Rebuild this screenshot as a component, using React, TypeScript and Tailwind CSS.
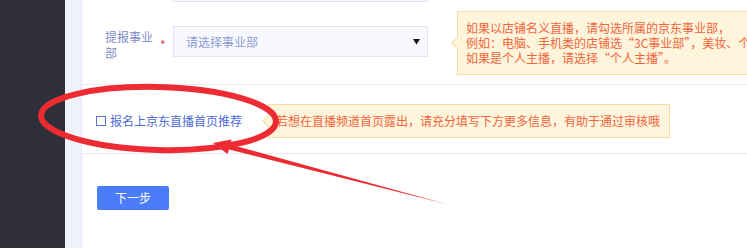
import { ReactNode } from 'react';

// Tooltip bubble with a small arrow pointing left
function Tip({ children, className }: { children: ReactNode; className?: string }) {
  return (
    <div
      className={`relative shrink-0 border border-[#f9dca4] bg-[#fff4dc] text-[12px] text-[#f0663c] ${className ?? ''}`}
    >
      <span className="absolute left-[-5px] top-[calc(50%-4px)] h-[8px] w-[8px] rotate-45 border-b border-l border-[#f9dca4] bg-[#fff4dc]" />
      <div className="relative">{children}</div>
    </div>
  );
}

export default function App() {
  return (
    <div className="relative flex h-[248px] w-[747px] overflow-hidden bg-white font-['Noto_Sans_CJK_SC','Liberation_Sans',sans-serif]">
      {/* sidebar */}
      <div className="w-[65px] shrink-0 bg-[#2e2f38]" />
      <div className="w-[17px] shrink-0 border-r border-[#e2e9f6] bg-[#eef3fc]" />

      <div className="min-w-0 flex-1">
        {/* bottom edge of the field above */}
        <div className="ml-[91px] h-[2px] w-[255px] border-x border-b border-[#dfe5f3] bg-[#f7f9fe]" />

        {/* 提报事业部 */}
        <div className="flex h-[83px] items-start border-b border-[#e8ebf5] pl-[23px]">
          <div className="mt-[27px] w-[50px] shrink-0 text-[12px] leading-[16px] text-[#7f8dc6]">提报事业部</div>
          <div className="mt-[37px] w-[18px] shrink-0 pl-[5px] text-[12px] leading-[12px] text-[#e8474a]">*</div>
          <div className="mt-[24px] flex h-[31px] w-[255px] shrink-0 items-center justify-between border border-[#dfe5f3] bg-[#f7f9fe] pl-[12px] pr-[7px]">
            <span className="text-[12px] text-[#8e9cd2]">请选择事业部</span>
            <svg width="7" height="7" viewBox="0 0 7 7">
              <path d="M0 1 H7 L3.5 6.5 Z" fill="#111" />
            </svg>
          </div>
          <Tip className="ml-[29px] mt-[9px] w-[420px] pb-[9px] pl-[8px] pt-[8px] leading-[15px]">
            <div className="whitespace-nowrap">如果以店铺名义直播，请勾选所属的京东事业部，</div>
            <div className="whitespace-nowrap">例如：电脑、手机类的店铺选“3C事业部”，美妆、个护类的店铺选“美妆事业部”</div>
            <div className="whitespace-nowrap">如果是个人主播，请选择“个人主播”。</div>
          </Tip>
        </div>

        {/* 报名上京东直播首页推荐 */}
        <div className="flex h-[69px] items-center border-b border-[#e8ebf5] pl-[14px] pt-[3px]">
          <span className="h-[10px] w-[10px] shrink-0 border border-[#5b74d3]" />
          <span className="ml-[4px] text-[12px] text-[#4e6bd6]">报名上京东直播首页推荐</span>
          <Tip className="ml-[26px] h-[34px] pl-[7px] pr-[9px] leading-[32px]">
            <div className="whitespace-nowrap">若想在直播频道首页露出，请充分填写下方更多信息，有助于通过审核哦</div>
          </Tip>
        </div>

        <button className="ml-[15px] mt-[32px] h-[24px] w-[72px] rounded-[2px] bg-[#4a7cf7] text-[12px] text-white">
          下一步
        </button>
      </div>

      {/* red annotation drawn over the page */}
      <svg className="pointer-events-none absolute inset-0" width="747" height="248" viewBox="0 0 747 248">
        <ellipse
          cx="158.5"
          cy="118.5"
          rx="117.5"
          ry="31.5"
          fill="none"
          stroke="#ec2c32"
          strokeWidth="6"
          transform="rotate(1.5 158.5 118.5)"
        />
        <polygon
          points="213,143 231.5,139.5 230.3,144.6 447,204.3 229.1,149.6 227.5,154"
          fill="#ec2c32"
        />
      </svg>
    </div>
  );
}
